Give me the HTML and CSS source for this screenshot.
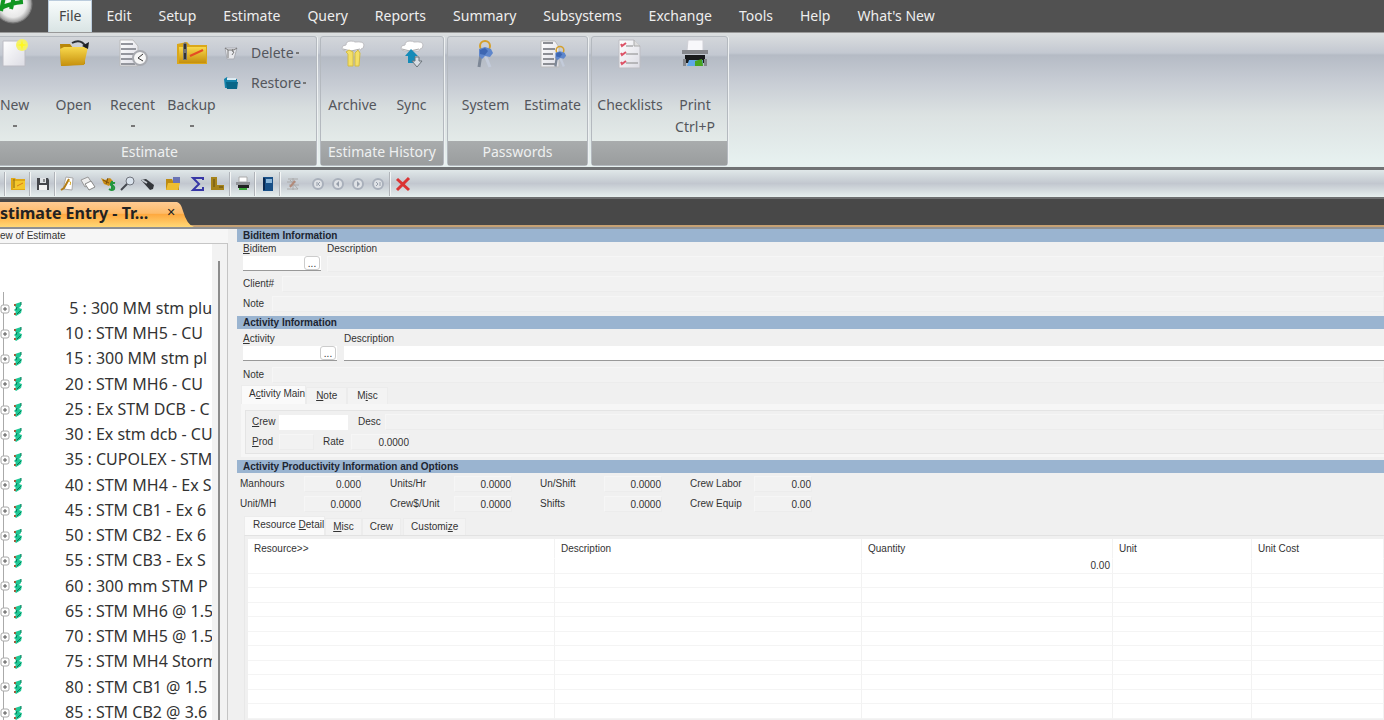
FILE: index.html
```html
<!DOCTYPE html>
<html lang="en">
<head>
<meta charset="utf-8">
<title>Estimate Entry</title>
<link rel="stylesheet" href="styles.css">
</head>
<body>
<svg class="defs" aria-hidden="true">
  <defs>
    <linearGradient id="gold" x1="0" y1="0" x2="0" y2="1"><stop offset="0" stop-color="#f8d84c"/><stop offset="1" stop-color="#c58f0c"/></linearGradient>
    <linearGradient id="paper" x1="0" y1="0" x2="1" y2="1"><stop offset="0" stop-color="#fff"/><stop offset="1" stop-color="#dcdce4"/></linearGradient>
    <radialGradient id="orb"><stop offset="0" stop-color="#fff"/><stop offset=".7" stop-color="#e8e8e8"/><stop offset="1" stop-color="#8f8f8f"/></radialGradient>
    <symbol id="bid" viewBox="0 0 12 16"><path d="M3 3l6-2v4L7 7l3 1-1 4-5 3-2-2 2-2-2-2 2-2-1-2z" fill="#1fc795"/><path d="M5 6l-1 3M9 9l-4 4M9 1v3" stroke="#087a58" fill="none"/><path d="M2 3h2v2H2zM2 12h2v2H2z" fill="#a65a3c"/></symbol>
    <symbol id="plus" viewBox="0 0 10 10"><rect x="1" y="1" width="8" height="8" rx="2" fill="#fff" stroke="#aaa"/><path d="M3 5h4M5 3v4" stroke="#555"/></symbol>
    <symbol id="cloud" viewBox="0 0 26 14"><path d="M2 8q0-3 4-3 0-4 5-4 3 0 4 1 9-1 9 3 0 4-3 4l-1 2H6q-4 0-4-3z" fill="#fff" stroke="#bcbcc0"/><path d="M3 9l8 2 9-2" stroke="#aaa" fill="none"/></symbol>
    <symbol id="keys" viewBox="0 0 20 30"><circle cx="10" cy="7" r="5" fill="none" stroke="#d5a02a" stroke-width="2"/><path d="M10 16l5 12" stroke="#c3cbda" stroke-width="3"/><path d="M6 15L4 28" stroke="#7d8796" stroke-width="3"/><path d="M4 10l6-2 6 2 2 4-3 4-5-1-3 3-3-3z" fill="#5e86cc"/><path d="M5 11l5-2 3 3-3 4-5-1z" fill="#3d66b2"/></symbol>
    <symbol id="page" viewBox="0 0 24 30"><path d="M1 1h15l6 6v22H1z" fill="url(#paper)" stroke="#bdbdc3"/><path d="M16 1v6h6" fill="#ddd" stroke="#aaa"/></symbol>
    <symbol id="nav" viewBox="0 0 16 16"><circle cx="8" cy="8" r="5" fill="#dfe2e6" stroke="#a9b0bb" stroke-width="2"/></symbol>
  </defs>
</svg>

<nav class="menubar" aria-label="Main menu">
  <button class="orb" aria-label="Application menu"><svg width="34" height="24" viewBox="0 0 34 24"><circle cx="13" cy="4" r="19" fill="url(#orb)" stroke="#777"/><path d="M-1 9Q10 3 23 2M4-3L1 11M14-3l-3 12M19-1l3-1" fill="none" stroke="#119622" stroke-width="4"/></svg></button>
  <button class="menu active">File</button>
  <button class="menu">Edit</button>
  <button class="menu">Setup</button>
  <button class="menu">Estimate</button>
  <button class="menu">Query</button>
  <button class="menu">Reports</button>
  <button class="menu">Summary</button>
  <button class="menu">Subsystems</button>
  <button class="menu">Exchange</button>
  <button class="menu">Tools</button>
  <button class="menu">Help</button>
  <button class="menu">What's New</button>
</nav>

<div class="ribbon">
  <section class="group group-estimate">
    <div class="tools">
      <button class="tool first"><svg width="30" height="30" viewBox="0 0 30 30"><path d="M3 2h22v25H3z" fill="url(#paper)" stroke="#bcbcc4"/><circle cx="22" cy="6" r="6" fill="#f5f264"/><path d="M22 1l1 4 4 1-4 1-1 4-1-4-4-1 4-1z" fill="#fff81c"/></svg><span>New</span><i></i></button>
      <button class="tool"><svg width="30" height="30" viewBox="0 0 30 30"><path d="M1 5h10l3 4h12v16L2 27z" fill="#b98709"/><path d="M1 10l4-2h24l-4 18-23 1z" fill="url(#gold)"/><path d="M13 4q9-5 14 4" fill="none" stroke="#2b2f35" stroke-width="2"/><path d="M23 7l6 3 1-7z" fill="#1d2025"/></svg><span>Open</span></button>
      <button class="tool"><svg width="30" height="30" viewBox="0 0 30 30"><path d="M2 1h13l5 6v20H2z" fill="url(#paper)" stroke="#bbb"/><path d="M3 5h12M3 10h15M3 15h14M3 20h12M3 25h14" stroke="#94969d" stroke-width="2"/><circle cx="22" cy="19" r="7" fill="#f7f7f7" stroke="#a8aab0" stroke-width="2"/><path d="M25 15l-5 4 5 3" fill="none" stroke="#333"/></svg><span>Recent</span><i></i></button>
      <button class="tool"><svg width="30" height="30" viewBox="0 0 30 30"><path d="M0 5l10-2 3 3h17v19H0z" fill="#dba719"/><path d="M2 8h27v16H2z" fill="url(#gold)"/><path d="M13 17l13-6" stroke="#e54c23" stroke-width="2"/><path d="M6 5l2-2 2 2v16H6z" fill="#737373"/><path d="M8 5v5M8 14v6" stroke="#333" stroke-width="2"/></svg><span>Backup</span><i></i></button>
      <div class="stack">
        <button class="small"><svg width="16" height="16" viewBox="0 0 16 16"><path d="M2 3l2 11h7l3-11z" fill="#e8e9ed" stroke="#aaacb3"/><path d="M2 3l3 2h6l3-2M5 5v8M10 4l-1 2 2 1-2 3" fill="none" stroke="#777"/></svg><span>Delete</span><i></i></button>
        <button class="small"><svg width="16" height="16" viewBox="0 0 16 16"><path d="M1 4l3-2 1 2h9v9H2z" fill="#1482aa"/><path d="M3 7h12l-1 7H4z" fill="#086587"/><path d="M4 4h9" stroke="#dceaf1" stroke-width="2"/></svg><span>Restore</span><i></i></button>
      </div>
    </div>
    <h2>Estimate</h2>
  </section>
  <section class="group group-history">
    <div class="tools">
      <button class="tool"><svg width="30" height="30" viewBox="0 0 30 30"><use href="#cloud" x="2" y="1" width="26" height="14"/><path d="M8 13l3-2 4 2v14h-5V15zM17 14l3-3 2 3-1 13h-4z" fill="#f3df66" stroke="#d4bc43"/></svg><span>Archive</span></button>
      <button class="tool"><svg width="30" height="30" viewBox="0 0 30 30"><use href="#cloud" x="2" y="1" width="26" height="14"/><path d="M14 10l7 7h-3v7h-7v-7H8z" fill="#168bb8"/><path d="M18 18h4v4h3l-5 6-5-6h3z" fill="#d8dde3" stroke="#6c747b"/></svg><span>Sync</span></button>
    </div>
    <h2>Estimate History</h2>
  </section>
  <section class="group group-passwords">
    <div class="tools">
      <button class="tool"><svg width="30" height="30" viewBox="0 0 30 30"><use href="#keys" x="4" width="20" height="30"/></svg><span>System</span></button>
      <button class="tool"><svg width="30" height="30" viewBox="0 0 30 30"><path d="M3 2h14l4 6v20H3z" fill="url(#paper)" stroke="#bbb"/><path d="M5 4h10M5 10h12M5 15h10M5 20h11M5 25h12" stroke="#8c8e94" stroke-width="2"/><use href="#keys" x="14" y="6" width="16" height="23"/></svg><span>Estimate</span></button>
    </div>
    <h2>Passwords</h2>
  </section>
  <section class="group group-print">
    <div class="tools">
      <button class="tool"><svg width="30" height="30" viewBox="0 0 30 30"><use href="#page" x="3" y="0" width="24" height="30"/><path d="M11 7h7M11 15h12M11 24h12" stroke="#888"/><path d="M6 5l1 2 4-3M6 14l1 2 4-3M6 23l1 2 4-3" fill="none" stroke="#dd5367" stroke-width="2"/></svg><span>Checklists</span></button>
      <button class="tool"><svg width="30" height="30" viewBox="0 0 30 30"><path d="M8 1h15v11H7z" fill="#f8f8fb" stroke="#d0d0d6"/><path d="M2 11h26v4H2z" fill="#85878c"/><path d="M5 16h20v8H5z" fill="#181a1c"/><path d="M3 20h3v7H3zM24 20h3v7h-3z" fill="#85878c"/><path d="M9 21h14v6H7z" fill="#61a7e8"/><path d="M15 22l7-2 1 7h-8z" fill="#48a51f"/></svg><span>Print<br>Ctrl+P</span></button>
    </div>
    <h2></h2>
  </section>
</div>

<div class="toolbar" role="toolbar" aria-label="Quick tools">
  <hr>
  <button aria-label="Estimate folder"><svg viewBox="0 0 16 16"><path d="M1 2h4l1 1h9v11H1z" fill="#e0a817"/><path d="M3 5h12v8H3z" fill="#f4c72d"/><path d="M7 10l6-3" stroke="#da7b19"/><path d="M4 3v9" stroke="#806414"/></svg></button><hr>
  <button aria-label="Save"><svg viewBox="0 0 16 16"><path d="M2 2h11l1 2v10H2z" fill="#44464b"/><path d="M5 2h6v5H5z" fill="#dfe2e5"/><path d="M4 9h8v5H4z" fill="#f3f3f3"/><path d="M9 3v3" stroke="#333"/></svg></button><hr>
  <button aria-label="Edit note"><svg viewBox="0 0 16 16"><path d="M6 1l7 1-1 12-9-1z" fill="#fff" stroke="#aaa"/><path d="M9 3L4 12l-3 2" stroke="#b27d18" stroke-width="2" fill="none"/><path d="M8 5q4 0 2 4" stroke="#d6a41a" fill="none"/></svg></button>
  <button aria-label="Copy"><svg viewBox="0 0 16 16"><path d="M1 4l7-3 4 6-7 4z" fill="#eee" stroke="#999"/><path d="M5 8l6-3 4 6-6 3z" fill="#fff" stroke="#888"/></svg></button>
  <button aria-label="Pricing"><svg viewBox="0 0 16 16"><path d="M1 2l4 2 5-2 3 3-4 5-5-2z" fill="#c98d14"/><path d="M3 4l6 3M8 2L6 8" stroke="#7c4e0d"/><path d="M15 7q-5-1-4 2 4 1 3 4-2 2-5 0M12 5v10" stroke="#23963d" stroke-width="2" fill="none"/></svg></button>
  <button aria-label="Find"><svg viewBox="0 0 16 16"><circle cx="10" cy="5" r="4" fill="#dae3ed" stroke="#70747d"/><path d="M7 8l-6 6" stroke="#454850" stroke-width="2"/></svg></button>
  <button aria-label="Flashlight"><svg viewBox="0 0 16 16"><path d="M1 4l5-1 8 6-1 4-3 1z" fill="#33363b"/><path d="M2 4l5 3" stroke="#c4c9d0" stroke-width="2"/></svg></button><hr class="blank">
  <button aria-label="Open folder"><svg viewBox="0 0 16 16"><path d="M1 3h6l1 2h6v9H1z" fill="#bd8b12"/><path d="M8 1h7v6H8z" fill="#6a73b4"/><path d="M3 7h12l-2 7H1z" fill="#edbd32"/></svg></button><hr class="blank">
  <button aria-label="Totals"><svg viewBox="0 0 16 16"><path d="M13 4V2H3l6 6-6 6h10v-3" fill="none" stroke="#3737a6" stroke-width="2"/></svg></button>
  <button aria-label="Levels"><svg viewBox="0 0 16 16"><path d="M1 1h6v8h7v5H1z" fill="#a5831a"/><path d="M4 3v8M9 11h4" stroke="#624d14"/></svg></button><hr>
  <button aria-label="Print"><svg viewBox="0 0 16 16"><path d="M4 1h8v5H4z" fill="#fff" stroke="#aaa"/><path d="M1 6h14v3H1z" fill="#909297"/><path d="M3 9h11v3H3z" fill="#222"/><path d="M4 12h8v2H4z" fill="#3aa637"/></svg></button><hr>
  <button aria-label="Calculator"><svg viewBox="0 0 16 16"><path d="M3 1h10v14H3z" fill="#184f87"/><path d="M6 3h6v4H6z" fill="#8bb6da"/><path d="M4 2v12" stroke="#0b2850" stroke-width="2"/></svg></button><hr>
  <button aria-label="Resources"><svg viewBox="0 0 16 16"><path d="M3 3h10M2 6h9M4 9h10M2 13h11M8 2v12M5 4l8 9" stroke="#aaa"/><path d="M10 5l-5 6" stroke="#b28a7a" stroke-width="2"/></svg></button><hr class="blank">
  <button aria-label="First"><svg viewBox="0 0 16 16"><use href="#nav"/><path d="M7 6v4M10 6L8 8l2 2" fill="none" stroke="#969eaa"/></svg></button>
  <button aria-label="Previous"><svg viewBox="0 0 16 16"><use href="#nav"/><path d="M9 5L6 8l3 3z" fill="#969eaa"/></svg></button>
  <button aria-label="Next"><svg viewBox="0 0 16 16"><use href="#nav"/><path d="M7 5l3 3-3 3z" fill="#969eaa"/></svg></button>
  <button aria-label="Last"><svg viewBox="0 0 16 16"><use href="#nav"/><path d="M6 6l2 2-2 2M10 6v4" fill="none" stroke="#969eaa"/></svg></button><hr>
  <button aria-label="Close"><svg viewBox="0 0 16 16"><path d="M2 3l12 11M14 2L2 14" stroke="#db3434" stroke-width="3"/></svg></button>
</div>

<div class="doctabs">
  <div class="doctab"><span>stimate Entry - Tr...</span><button aria-label="Close tab">✕</button></div>
  <svg width="20" height="25" viewBox="0 0 20 25" aria-hidden="true"><defs><linearGradient id="tabfill" x1="0" y1="0" x2="0" y2="1"><stop offset="0" stop-color="#fecb93"/><stop offset=".45" stop-color="#fdba68"/><stop offset=".5" stop-color="#fea940"/><stop offset="1" stop-color="#ffd876"/></linearGradient></defs><path d="M0 0q4 1 6 9 4 14 11 16H0z" fill="url(#tabfill)"/></svg>
</div>

<main class="workspace">
  <aside class="side">
    <h3>ew of Estimate</h3>
    <div class="treebox">
      <ul class="tree">
        <li><svg class="plus"><use href="#plus"/></svg><svg class="bid"><use href="#bid"/></svg><span>&nbsp;5 : 300 MM stm plu</span></li>
        <li><svg class="plus"><use href="#plus"/></svg><svg class="bid"><use href="#bid"/></svg><span>10 : STM MH5 - CU</span></li>
        <li><svg class="plus"><use href="#plus"/></svg><svg class="bid"><use href="#bid"/></svg><span>15 : 300 MM stm pl</span></li>
        <li><svg class="plus"><use href="#plus"/></svg><svg class="bid"><use href="#bid"/></svg><span>20 : STM MH6 - CU</span></li>
        <li><svg class="plus"><use href="#plus"/></svg><svg class="bid"><use href="#bid"/></svg><span>25 : Ex STM DCB - C</span></li>
        <li><svg class="plus"><use href="#plus"/></svg><svg class="bid"><use href="#bid"/></svg><span>30 : Ex stm dcb - CU</span></li>
        <li><svg class="plus"><use href="#plus"/></svg><svg class="bid"><use href="#bid"/></svg><span>35 : CUPOLEX - STM</span></li>
        <li><svg class="plus"><use href="#plus"/></svg><svg class="bid"><use href="#bid"/></svg><span>40 : STM MH4 - Ex S</span></li>
        <li><svg class="plus"><use href="#plus"/></svg><svg class="bid"><use href="#bid"/></svg><span>45 : STM CB1 - Ex 6</span></li>
        <li><svg class="plus"><use href="#plus"/></svg><svg class="bid"><use href="#bid"/></svg><span>50 : STM CB2 - Ex 6</span></li>
        <li><svg class="plus"><use href="#plus"/></svg><svg class="bid"><use href="#bid"/></svg><span>55 : STM CB3 - Ex S</span></li>
        <li><svg class="plus"><use href="#plus"/></svg><svg class="bid"><use href="#bid"/></svg><span>60 : 300 mm STM P</span></li>
        <li><svg class="plus"><use href="#plus"/></svg><svg class="bid"><use href="#bid"/></svg><span>65 : STM MH6 @ 1.5</span></li>
        <li><svg class="plus"><use href="#plus"/></svg><svg class="bid"><use href="#bid"/></svg><span>70 : STM MH5 @ 1.5</span></li>
        <li><svg class="plus"><use href="#plus"/></svg><svg class="bid"><use href="#bid"/></svg><span>75 : STM MH4 Storm</span></li>
        <li><svg class="plus"><use href="#plus"/></svg><svg class="bid"><use href="#bid"/></svg><span>80 : STM CB1 @ 1.5</span></li>
        <li><svg class="plus"><use href="#plus"/></svg><svg class="bid"><use href="#bid"/></svg><span>85 : STM CB2 @ 3.6</span></li>
      </ul>
      <div class="scroll"><div class="thumb"></div></div>
    </div>
  </aside>

  <div class="content">
    <section class="biditem">
      <h3 class="bar">Biditem Information</h3>
      <div class="lookup">
        <div class="field"><label for="biditem"><u>B</u>iditem</label><div class="picker"><input id="biditem"><button aria-label="Browse biditems">...</button></div></div>
        <div class="field"><label for="biddesc">Description</label><input id="biddesc" class="flat" readonly></div>
      </div>
      <div class="line"><label for="client">Client#</label><input id="client" class="flat" readonly></div>
      <div class="line"><label for="bidnote">Note</label><input id="bidnote" class="flat" readonly></div>
    </section>

    <section class="activity">
      <h3 class="bar">Activity Information</h3>
      <div class="lookup wide">
        <div class="field"><label for="activity"><u>A</u>ctivity</label><div class="picker"><input id="activity"><button aria-label="Browse activities">...</button></div></div>
        <div class="field"><label for="actdesc">Description</label><input id="actdesc" class="edit"></div>
      </div>
      <div class="line"><label for="actnote">Note</label><input id="actnote" class="flat" readonly></div>
      <div class="tabs">
        <button class="on">A<u>c</u>tivity Main</button><button><u>N</u>ote</button><button>M<u>i</u>sc</button>
      </div>
      <div class="pane"><div class="crew">
        <div class="crewrow"><label for="crew"><u>C</u>rew</label><input id="crew" class="white"><label for="desc">Desc</label><input id="desc" class="flat" readonly></div>
        <div class="crewrow prod"><label for="prod"><u>P</u>rod</label><input id="prod" class="flat" readonly><label for="rate">Rate</label><input id="rate" class="flat num" value="0.0000" readonly></div>
      </div></div>
    </section>

    <section class="productivity">
      <h3 class="bar">Activity Productivity Information and Options</h3>
      <div class="stats">
        <label for="s1">Manhours</label><input id="s1" class="flat num" value="0.000" readonly>
        <label for="s2">Units/Hr</label><input id="s2" class="flat num" value="0.0000" readonly>
        <label for="s3">Un/Shift</label><input id="s3" class="flat num" value="0.0000" readonly>
        <label for="s4">Crew Labor</label><input id="s4" class="flat num" value="0.00" readonly>
        <label for="s5">Unit/MH</label><input id="s5" class="flat num" value="0.0000" readonly>
        <label for="s6">Crew$/Unit</label><input id="s6" class="flat num" value="0.0000" readonly>
        <label for="s7">Shifts</label><input id="s7" class="flat num" value="0.0000" readonly>
        <label for="s8">Crew Equip</label><input id="s8" class="flat num" value="0.00" readonly>
      </div>
      <div class="tabs detail">
        <button class="on">Resource <u>D</u>etail</button><button><u>M</u>isc</button><button>Crew</button><button>Customi<u>z</u>e</button>
      </div>
      <div class="sheet">
        <table>
          <colgroup><col class="c-res"><col class="c-desc"><col class="c-qty"><col class="c-unit"><col></colgroup>
          <thead><tr><th>Resource&gt;&gt;</th><th>Description</th><th>Quantity</th><th>Unit</th><th>Unit Cost</th></tr></thead>
          <tbody>
            <tr><td></td><td></td><td class="qty">0.00</td><td></td><td></td></tr>
            <tr><td></td><td></td><td></td><td></td><td></td></tr>
            <tr><td></td><td></td><td></td><td></td><td></td></tr>
            <tr><td></td><td></td><td></td><td></td><td></td></tr>
            <tr><td></td><td></td><td></td><td></td><td></td></tr>
            <tr><td></td><td></td><td></td><td></td><td></td></tr>
            <tr><td></td><td></td><td></td><td></td><td></td></tr>
            <tr><td></td><td></td><td></td><td></td><td></td></tr>
            <tr><td></td><td></td><td></td><td></td><td></td></tr>
            <tr><td></td><td></td><td></td><td></td><td></td></tr>
            <tr><td></td><td></td><td></td><td></td><td></td></tr>
          </tbody>
        </table>
      </div>
    </section>
  </div>
</main>
</body>
</html>
```
FILE: styles.css
```css
* { box-sizing: border-box; }
html, body { height: 100%; }
body {
  margin: 0;
  display: flex;
  flex-direction: column;
  overflow: hidden;
  background: #f0f0f0;
  color: #333;
  font: 10px/14px "Liberation Sans", Arial, sans-serif;
}
button, input { font: inherit; color: inherit; margin: 0; padding: 0; border: 0; background: none; }
input { min-width: 0; outline: 0; }
h2, h3, ul { margin: 0; padding: 0; list-style: none; }
svg { display: block; }
.defs { position: absolute; width: 0; height: 0; }

/* Menu bar */
.menubar {
  flex: none;
  display: flex;
  gap: 1px;
  height: 32px;
  background: #515151;
  font: 14px/20px "Noto Sans", "Open Sans", sans-serif;
}
.orb { width: 47px; }
.orb svg { margin-bottom: 8px; }
.menu { padding: 0 13px 1px; color: #eee; white-space: nowrap; }
.menu.active { padding: 0 10px 1px; background: linear-gradient(#f8fcfc, #d9e4e4); color: #444; border: 1px solid #bcd; border-bottom: 0; }

/* Ribbon */
.ribbon {
  flex: none;
  display: flex;
  gap: 3px;
  height: 135px;
  padding: 3px 0 1px;
  border-top: 1px solid #999;
  background: linear-gradient(#dcdfe0, #c3c8d1 20px, #b5bbc5 22px, #c7ccd4 48px, #dce2e2 82px, #e7f1f0 130px);
  font: 14px/22px "Noto Sans", "Open Sans", sans-serif;
  color: #54565c;
}
.group {
  display: flex;
  flex-direction: column;
  border: 1px solid #b4b9bf;
  border-radius: 3px;
  box-shadow: 1px 0 #eef1f2;
  background: linear-gradient(#d3d6da, #c3c8d1 18px, #b5bbc5 20px, #c7ccd4 48px, #d8dedf 72px, #e4ebe9 105px);
}
.group h2 {
  height: 24px;
  font-size: 14px;
  line-height: 22px;
  font-weight: 400;
  text-align: center;
  color: #eef0f0;
  background: linear-gradient(#a9acad, #9a9d9e);
}
.group-estimate { width: 317px; border-left: 0; border-radius: 0 3px 3px 0; }
.group-estimate h2 { padding-right: 17px; }
.group-history { width: 124px; }
.group-passwords { width: 141px; }
.group-print { width: 137px; }
.tools { flex: 1; display: flex; }
.tool { flex: none; display: flex; flex-direction: column; align-items: center; width: 59px; padding-top: 2px; line-height: 22px; white-space: nowrap; }
.tool svg { margin-bottom: 25px; }
.tool i { width: 4px; height: 2px; margin-top: 9px; background: #777; }
.tool.first { width: 44px; padding-right: 15px; }
.group-history .tools { padding-left: 2px; }
.group-passwords .tools { padding-left: 4px; }
.group-passwords .tool { width: 67px; }
.group-print .tools { padding-left: 2px; }
.group-print .tool { width: 72px; }
.group-print .tool + .tool { width: 58px; }
.stack { display: flex; flex-direction: column; padding: 1px 0 0 2px; }
.small { display: flex; align-items: center; height: 30px; gap: 2px; line-height: 22px; }
.small span { margin-left: 10px; }
.small i { width: 3px; height: 2px; background: #777; }

/* Icon toolbar */
.toolbar {
  flex: none;
  display: flex;
  align-items: center;
  height: 32px;
  padding-left: 3px;
  border-top: 3px solid #707274;
  border-bottom: 2px solid #6d6f70;
  background: linear-gradient(#e0e8e9, #c2c7cf 50%, #e6efee);
}
.toolbar button { display: grid; place-items: center; width: 20px; height: 20px; }
.toolbar svg { width: 16px; height: 16px; }
.toolbar hr { width: 5px; height: 24px; margin: 0; border: 0; background: linear-gradient(90deg, transparent 1px, #b0b4b9 1px 2px, #f4f6f6 2px 3px, transparent 3px); }
.toolbar hr.blank { background: none; }

/* Document tabs */
.doctabs {
  flex: none;
  display: flex;
  align-items: flex-end;
  height: 30px;
  background: #484848;
  border-bottom: 2px solid #8e9093;
  box-shadow: inset 0 -2px #c6a173;
}
.doctab {
  display: flex;
  align-items: center;
  gap: 17px;
  height: 25px;
  padding-bottom: 3px;
  background: linear-gradient(#fecb93, #fdba68 45%, #fea940 50%, #ffd876);
  font: 700 16px/22px "Noto Sans", "Open Sans", sans-serif;
  color: #222;
  white-space: nowrap;
}
.doctab button { width: 12px; font: 11px/16px "DejaVu Sans", sans-serif; }

/* Workspace */
.workspace { flex: 1; min-height: 0; display: flex; }
.side { flex: none; display: flex; flex-direction: column; width: 228px; margin-right: 9px; }
.side h3 { height: 14px; line-height: 13px; font-size: 10px; font-weight: 400; background: #f6f6f6; }
.treebox { flex: 1; min-height: 0; display: flex; border-top: 1px solid #c6c6c6; border-right: 1px solid #c4c4c4; background: #fff; }
.tree { flex: 1; min-width: 0; padding-top: 52px; overflow: hidden; font: 16px/25px "Noto Sans", "Open Sans", sans-serif; color: #333; background: linear-gradient(#aaa, #aaa) 3px 48px / 1px 100% no-repeat; }
.tree li { display: flex; align-items: center; height: 25px; white-space: nowrap; }
.tree li:nth-child(4n) { height: 26px; }
.plus { flex: none; width: 10px; height: 10px; }
.bid { flex: none; width: 12px; height: 16px; margin: 0 41px 0 2px; }
.scroll { width: 15px; padding: 17px 0 0 6px; background: #f2f2f2; }
.thumb { width: 2px; height: 100%; background: #8c8c8c; }

/* Forms */
.content { flex: 1; min-width: 0; display: flex; flex-direction: column; overflow: hidden; }
.bar { height: 13px; padding-left: 6px; background: #9ab4d0; font-size: 10px; line-height: 13px; color: #1c2430; }
.flat { background: #f2f2f2; border: 1px solid #f6f6f6; border-right-color: #ececec; border-bottom-color: #ececec; height: 16px; }
.lookup { display: grid; grid-template-columns: 78px 1fr; gap: 6px; padding-left: 6px; }
.lookup.wide { grid-template-columns: 94px 1fr; gap: 7px; }
.field { display: flex; flex-direction: column; }
.picker { display: flex; background: #fff; border-bottom: 1px solid #999; height: 15px; }
.picker input { flex: 1; }
.picker button { width: 16px; margin-right: 1px; border: 1px solid #ccc; border-radius: 3px; line-height: 9px; }
.edit { height: 15px; background: #fff; border-bottom: 1px solid #999; }
.line { display: flex; align-items: center; gap: 8px; height: 20px; padding-left: 6px; }
.line input { flex: 1; }
.biditem { height: 87px; }
.biditem .lookup { padding-bottom: 2px; }
.activity .bar { margin-bottom: 3px; }
.activity .lookup { padding-bottom: 4px; }
.activity { height: 144px; }
.tabs { display: flex; align-items: flex-end; height: 19px; padding-left: 4px; }
.tabs button { height: 17px; padding: 0 9px; border: 1px solid #ececec; border-bottom: 0; background: #f3f3f3; white-space: nowrap; }
.tabs .on { height: 19px; padding: 0 0 2px 7px; background: #fafafa; }
.pane { margin-left: 4px; padding: 6px 0 0 4px; height: 53px; background: #f6f6f6; }
.crew { padding: 1px 0 0 6px; height: 44px; border: 1px solid #e4e4e4; border-right: 0; background: #f0f0f0; }
.crewrow { display: grid; grid-template-columns: 27px 69px 10px 27px 1fr; height: 20px; align-items: center; }
.crewrow label:nth-of-type(2) { grid-column: 4; }
.crewrow.prod { grid-template-columns: 27px 35px 9px 28px 59px; }
.white { background: #fff; height: 15px; }
.num { text-align: right; }
.stats { display: grid; grid-template-columns: repeat(4, 54px 68px); column-gap: 14px; grid-auto-rows: 20px; align-items: center; padding: 1px 0 0 3px; white-space: nowrap; }
.stats { grid-template-columns: repeat(4, 52px 70px); }
.stats input { margin-left: -2px; }
.productivity { flex: 1; min-height: 0; display: flex; flex-direction: column; }
.detail { flex: none; margin-top: 2px; padding-left: 7px; }
.detail button { padding: 0 7px; }
.detail button:last-child { margin-left: 2px; }
.detail .on { padding: 0 0 2px 8px; }
.sheet { flex: 1; min-height: 0; overflow: hidden; margin-left: 7px; padding: 3px 0 0 3px; border-left: 1px solid #e8e8e8; border-top: 1px solid #e2e2e2; }
table { width: 100%; table-layout: fixed; border-collapse: separate; border-spacing: 0; background: #fff; }
.c-res, .c-desc { width: 307px; }
.c-qty { width: 251px; }
.c-unit { width: 139px; }
th, td { height: 15px; padding: 0 2px 0 6px; border-right: 1px solid #f2f2f2; border-bottom: 1px solid #f4f4f4; text-align: left; font-weight: 400; line-height: 12px; }
tr:nth-child(even) td { height: 14px; }
th { height: 20px; border-bottom-color: #fff; }
.qty { text-align: right; }

/* Stat columns repeat every 150px: label, value, then the shared gap */
.stats { column-gap: 0; grid-template-columns: repeat(4, 64px 58px 28px); }
.stats label { grid-column: span 1; }
.stats input { grid-column: span 2; width: 58px; margin-left: 0; }
```
